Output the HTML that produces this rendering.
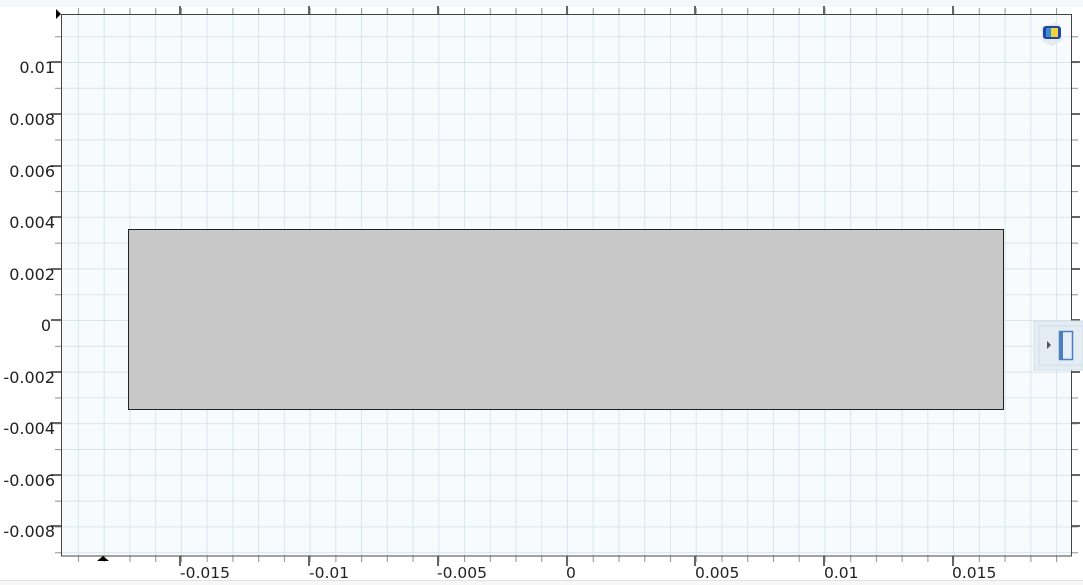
<!DOCTYPE html>
<html><head><meta charset="utf-8"><style>
html,body{margin:0;padding:0;width:1083px;height:585px;overflow:hidden;background:#fff;font-family:"DejaVu Sans","Liberation Sans",sans-serif}
</style></head><body>
<svg width="1083" height="585" xmlns="http://www.w3.org/2000/svg" style="display:block">
<defs>
<pattern id="gx" patternUnits="userSpaceOnUse" x="0.7" y="0" width="25.74" height="600"><line x1="0.5" y1="0" x2="0.5" y2="600" stroke="#d9e5ed" stroke-width="1"/></pattern>
<pattern id="gy" patternUnits="userSpaceOnUse" x="0" y="10.4" width="1100" height="25.8"><line x1="0" y1="0.5" x2="1100" y2="0.5" stroke="#d9e5ed" stroke-width="1"/></pattern>
<pattern id="tx" patternUnits="userSpaceOnUse" x="0.7" y="0" width="25.74" height="600"><line x1="0.5" y1="0" x2="0.5" y2="600" stroke="#999" stroke-width="1.2"/></pattern>
<pattern id="ty" patternUnits="userSpaceOnUse" x="0" y="10.4" width="1100" height="25.8"><line x1="0" y1="0.5" x2="1100" y2="0.5" stroke="#999" stroke-width="1.2"/></pattern>
</defs>
<rect x="0" y="0" width="1083" height="7" fill="#f4f6fa"/>
<rect x="0" y="580" width="1083" height="5" fill="#e2e2e2"/>
<rect x="0" y="581" width="1083" height="4" fill="#f7f7f7"/>
<rect x="61" y="14" width="1010" height="542" fill="#f7fbfe"/>
<rect x="61" y="14" width="1010" height="542" fill="url(#gx)"/>
<rect x="61" y="14" width="1010" height="542" fill="url(#gy)"/>
<rect x="62" y="8" width="1009" height="6" fill="url(#tx)"/>
<rect x="62" y="556" width="1009" height="6" fill="url(#tx)"/>
<rect x="55" y="15" width="6" height="540" fill="url(#ty)"/>
<rect x="1071" y="15" width="7" height="540" fill="url(#ty)"/>
<g stroke="#666" stroke-width="2">
<path d="M180 6V14M309 6V14M438 6V14M567 6V14M695 6V14M824 6V14M953 6V14"/>
<path d="M180 556V566M309 556V566M438 556V566M567 556V566M695 556V566M824 556V566M953 556V566"/>
<path d="M51 62H61M51 114H61M51 166H61M51 217H61M51 269H61M51 320H61M51 372H61M51 423H61M51 475H61M51 526H61"/>
<path d="M1071 62H1080M1071 114H1080M1071 166H1080M1071 217H1080M1071 269H1080M1071 320H1080M1071 372H1080M1071 423H1080M1071 475H1080M1071 526H1080"/>
</g>
<rect x="61.5" y="14.5" width="1010" height="541.5" fill="none" stroke="#444" stroke-width="1"/>
<rect x="128.5" y="229.5" width="875" height="180" fill="#c8c8c8" stroke="#222" stroke-width="1"/>
<path d="M56 9L61 14L56 19Z" fill="#000"/>
<path d="M97 561L103 556L109 561Z" fill="#000"/>
<g font-size="16" fill="#222" text-anchor="end">
<text x="55" y="73">0.01</text>
<text x="55" y="125">0.008</text>
<text x="55" y="177">0.006</text>
<text x="55" y="228">0.004</text>
<text x="55" y="280">0.002</text>
<text x="51" y="331">0</text>
<text x="55" y="383">-0.002</text>
<text x="55" y="434">-0.004</text>
<text x="55" y="486">-0.006</text>
<text x="55" y="537">-0.008</text>
</g>
<g font-size="15.5" fill="#222">
<text x="180" y="578">-0.015</text>
<text x="309" y="578">-0.01</text>
<text x="437" y="578">-0.005</text>
<text x="566" y="578">0</text>
<text x="695" y="578">0.005</text>
<text x="824" y="578">0.01</text>
<text x="952" y="578">0.015</text>
</g>
<path d="M1041 27L1058 22L1063 40L1052 46L1042 41Z" fill="#e6eaee"/>
<rect x="1043" y="26" width="18" height="13" rx="3" fill="#1d47a0"/>
<rect x="1046" y="28" width="12" height="9" fill="#f2d23a"/>
<rect x="1046" y="28" width="5" height="9" fill="#3b8bd6"/>
<rect x="1034" y="321" width="49" height="49" fill="#e4ecf4" stroke="#d6dee8"/>
<rect x="1039" y="326" width="44" height="39" fill="none" stroke="#d4dce6"/>
<path d="M1047 341L1051 345L1047 349Z" fill="#555"/>
<rect x="1059.5" y="331.5" width="13" height="28" fill="#e6eef7" stroke="#4a7fc0" stroke-width="1.5"/>
<rect x="1059" y="331" width="4" height="29" fill="#4a7fc0"/>
</svg>
</body></html>
